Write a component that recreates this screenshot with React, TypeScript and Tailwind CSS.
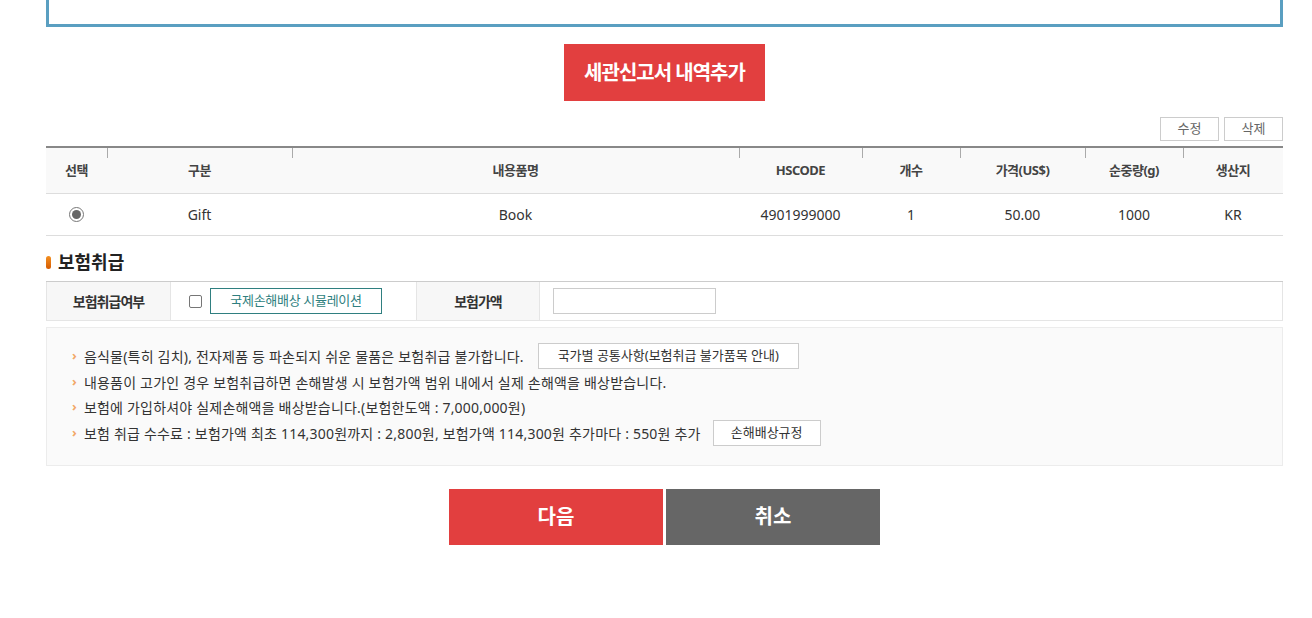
import React from "react";

const font = { fontFamily: '"Noto Sans", "Noto Sans CJK KR", sans-serif' };

const cols = [
  { label: "선택", w: "w-[61px]" },
  { label: "구분", w: "w-[185px]" },
  { label: "내용품명", w: "w-[447px]" },
  { label: "HSCODE", w: "w-[123px]" },
  { label: "개수", w: "w-[98px]" },
  { label: "가격(US$)", w: "w-[125px]" },
  { label: "순중량(g)", w: "w-[98px]" },
  { label: "생산지", w: "flex-1" },
];

const rowVals = ["", "Gift", "Book", "4901999000", "1", "50.00", "1000", "KR"];

function Bullet() {
  return <span className="mr-[7px] text-[13px] text-[#f2a868] font-bold">›</span>;
}

export default function App() {
  return (
    <div className="w-[1312px] h-[618px] overflow-hidden bg-white text-[#333]" style={font}>
      <div className="px-[46px] pr-[29px]">
        {/* top box */}
        <div className="h-[27px] border-[3px] border-t-0 border-[#5a9fc1]"></div>

        {/* add button */}
        <div className="flex justify-center mt-[17px]">
          <button className="w-[201px] h-[57px] bg-[#e23f3f] text-white text-[20px] font-bold tracking-[-1px]">
            세관신고서 내역추가
          </button>
        </div>

        {/* edit buttons */}
        <div className="flex justify-end gap-[5px] mt-[16px]">
          <button className="w-[59px] h-[24px] border border-[#ccc] text-[13px] text-[#666]">수정</button>
          <button className="w-[59px] h-[24px] border border-[#ccc] text-[13px] text-[#666]">삭제</button>
        </div>

        {/* items table */}
        <div className="mt-[5px] border-t-2 border-[#888]">
          <div className="flex h-[46px] bg-[#f9f9f9] border-b border-[#ddd]">
            {cols.map((c, i) => (
              <div key={i} className={`${c.w} relative flex items-center justify-center text-[13px] font-bold text-[#444] tracking-[-0.5px]`}>
                {i > 0 && <span className="absolute left-0 top-0 h-[10px] w-px bg-[#aaa]"></span>}
                {c.label}
              </div>
            ))}
          </div>
          <div className="flex h-[42px] border-b border-[#ddd]">
            {cols.map((c, i) => (
              <div key={i} className={`${c.w} flex items-center justify-center text-[14px] text-[#333]`}>
                {i === 0 ? (
                  <span className="w-[15px] h-[15px] rounded-full border border-[#777] bg-white flex items-center justify-center">
                    <span className="w-[9px] h-[9px] rounded-full bg-[#666]"></span>
                  </span>
                ) : (
                  rowVals[i]
                )}
              </div>
            ))}
          </div>
        </div>

        {/* section title */}
        <div className="flex items-center mt-[14px] h-[24px]">
          <span className="w-[5px] h-[13px] rounded-full bg-gradient-to-b from-[#f39020] to-[#d55a00] mr-[7px]"></span>
          <span className="text-[18px] font-bold text-[#222]">보험취급</span>
        </div>

        {/* insurance table */}
        <div className="mt-[7px] flex h-[40px] border-t border-b border-[#ccc] border-b-[#e5e5e5]">
          <div className="w-[125px] bg-[#f7f7f7] flex items-center justify-center text-[14px] font-bold text-[#333] tracking-[-1px] border-r border-[#e5e5e5] border-l border-l-[#e5e5e5]">
            보험취급여부
          </div>
          <div className="w-[246px] flex items-center pl-[18px] gap-[8px] border-r border-[#e5e5e5]">
            <span className="w-[13px] h-[13px] border border-[#767676] rounded-[2px] bg-white"></span>
            <button className="w-[172px] h-[26px] border border-[#2f7f80] text-[13px] text-[#2f7f80] tracking-[-0.3px]">
              국제손해배상 시뮬레이션
            </button>
          </div>
          <div className="w-[123px] bg-[#f7f7f7] flex items-center justify-center text-[14px] font-bold text-[#333] tracking-[-1px] border-r border-[#e5e5e5]">
            보험가액
          </div>
          <div className="flex-1 flex items-center pl-[13px] border-r border-[#e5e5e5]">
            <div className="w-[163px] h-[26px] border border-[#ccc] bg-white"></div>
          </div>
        </div>

        {/* info box */}
        <div className="mt-[6px] h-[139px] bg-[#fafafa] border border-[#ececec] pl-[25px] pt-[15px] text-[14px] text-[#333] tracking-[0.2px]">
          <div className="flex items-center h-[26px]">
            <Bullet />
            <span>음식물(특히 김치), 전자제품 등 파손되지 쉬운 물품은 보험취급 불가합니다.</span>
            <button className="ml-[14px] w-[261px] h-[26px] border border-[#ccc] bg-white text-[13px] text-[#333] tracking-normal">
              국가별 공통사항(보험취급 불가품목 안내)
            </button>
          </div>
          <div className="flex items-center h-[26px]">
            <Bullet />
            <span>내용품이 고가인 경우 보험취급하면 손해발생 시 보험가액 범위 내에서 실제 손해액을 배상받습니다.</span>
          </div>
          <div className="flex items-center h-[24px]">
            <Bullet />
            <span>보험에 가입하셔야 실제손해액을 배상받습니다.(보험한도액 : 7,000,000원)</span>
          </div>
          <div className="flex items-center h-[28px]">
            <Bullet />
            <span>보험 취급 수수료 : 보험가액 최초 114,300원까지 : 2,800원, 보험가액 114,300원 추가마다 : 550원 추가</span>
            <button className="ml-[12px] w-[108px] h-[26px] border border-[#ccc] bg-white text-[13px] text-[#333] tracking-normal">
              손해배상규정
            </button>
          </div>
        </div>

        {/* bottom buttons */}
        <div className="flex justify-center gap-[3px] mt-[23px]">
          <button className="w-[214px] h-[56px] bg-[#e23f3f] text-white text-[20px] font-bold">다음</button>
          <button className="w-[214px] h-[56px] bg-[#666] text-white text-[20px] font-bold">취소</button>
        </div>
      </div>
    </div>
  );
}
